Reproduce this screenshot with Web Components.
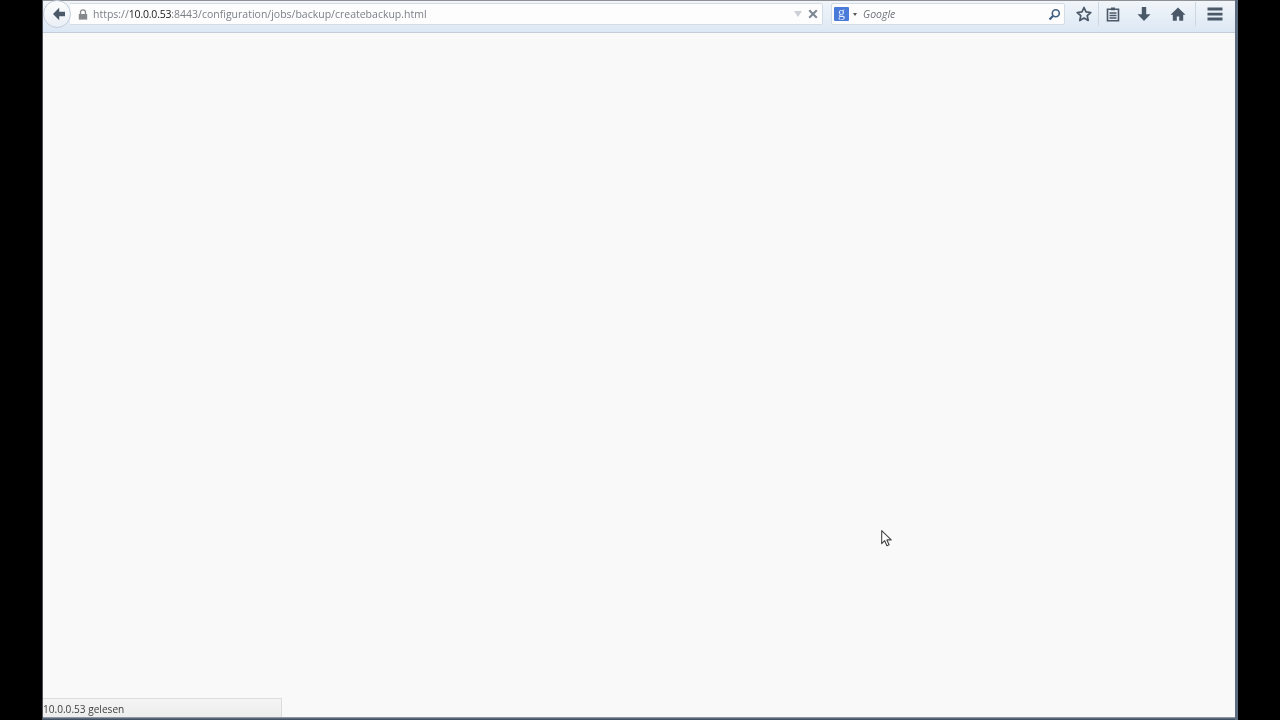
<!DOCTYPE html>
<html>
<head>
<meta charset="utf-8">
<style>
    html, body { margin: 0; height: 100%; background: #000; overflow: hidden; }
    body { font-family: "Open Sans", "Liberation Sans", sans-serif; }
</style>
</head>
<body>
<fx-desktop>
    <fx-window>
        <fx-toolbar slot="toolbar">
            <fx-back slot="back"></fx-back>
            <fx-urlbar slot="url" host="10.0.0.53" scheme="https://" rest=":8443/configuration/jobs/backup/createbackup.html"></fx-urlbar>
            <fx-searchbar slot="search" placeholder="Google"></fx-searchbar>
            <fx-tool slot="tools" icon="star" width="28"></fx-tool>
            <fx-tool slot="tools" icon="list" width="30" divider></fx-tool>
            <fx-tool slot="tools" icon="download" width="32"></fx-tool>
            <fx-tool slot="tools" icon="home" width="35"></fx-tool>
            <fx-tool slot="tools" icon="menu" width="40" divider></fx-tool>
        </fx-toolbar>
        <fx-status>10.0.0.53 gelesen</fx-status>
        <fx-cursor></fx-cursor>
    </fx-window>
</fx-desktop>

<script>
const ICONS = {
    star: `<path d="M8 1.500l2 4.400 4.800.6-3.600 3.200 1 4.800L8 12.100l-4.200 2.400 1-4.800L1.200 6.500 6 5.900z" fill="none" stroke="#4b5868" stroke-width="1.700" stroke-linejoin="round"/>`,
    list: `<path d="M2.500 3.300h11v11.400h-11z" fill="none" stroke="#4b5868" stroke-width="1.600"/><path d="M6 1.500h4v2.800H6z" fill="#4b5868"/><path d="M4.500 7h7M4.500 9.500h7M4.500 12h7" stroke="#4b5868" stroke-width="1.300"/>`,
    download: `<path d="M5.800 1h4.400v7.200h4.300L8 15 1.500 8.200h4.300z" fill="#4b5868"/>`,
    home: `<path d="M8 1.500L.5 8.700h2.300v6h4v-4.200h2.400v4.200h4v-6h2.300z" fill="#4b5868"/>`,
    menu: `<path d="M.5 1.500h15v3H.5zM.5 6.800h15v2.600H.5zM.5 11.500h15v3H.5z" fill="#4b5868"/>`,
};

class FxDesktop extends HTMLElement {
    constructor() {
        super();
        this.attachShadow({ mode: "open" }).innerHTML = `
            <style>
                :host { display: flex; height: 720px; background: #000; }
                .edge-left { width: 43px; flex: none; box-sizing: border-box; background: #000; border-right: 1px solid #4c4f55; }
                .edge-right { width: 45px; flex: none; background: #000; border-left: 3px solid #5d6b80; box-sizing: border-box; }
                .main { flex: 1; min-width: 0; display: flex; }
            </style>
            <div class="edge-left"></div>
            <div class="main"><slot></slot></div>
            <div class="edge-right"></div>
        `;
    }
}

class FxWindow extends HTMLElement {
    constructor() {
        super();
        this.attachShadow({ mode: "open" }).innerHTML = `
            <style>
                :host { display: flex; flex-direction: column; flex: 1; position: relative; height: 720px; background: #f9f9f9; }
                .page { flex: 1; background: #f9f9f9; }
                .bottom { height: 3px; flex: none; background: linear-gradient(#a8b0bb, #4b5a6c 60%, #3c4a5c); }
            </style>
            <slot name="toolbar"></slot>
            <div class="page"></div>
            <div class="bottom"></div>
            <slot></slot>
        `;
    }
}

class FxToolbar extends HTMLElement {
    constructor() {
        super();
        this.attachShadow({ mode: "open" }).innerHTML = `
            <style>
                :host {
                    display: flex; align-items: center; flex: none;
                    height: 33px; box-sizing: border-box;
                    border-top: 1px solid #8e9196;
                    border-bottom: 1px solid #c4ced9;
                    background: linear-gradient(#f1f5f9, #dce8f5);
                    padding-bottom: 5px;
                }
                .nav { display: flex; align-items: center; flex: 1; min-width: 0; }
                .tools { display: flex; align-items: center; flex: none; margin-left: 5px; }
            </style>
            <div class="nav">
                <slot name="back"></slot>
                <slot name="url"></slot>
            </div>
            <slot name="search"></slot>
            <div class="tools"><slot name="tools"></slot></div>
        `;
    }
}

class FxBack extends HTMLElement {
    constructor() {
        super();
        this.attachShadow({ mode: "open" }).innerHTML = `
            <style>
                :host {
                    display: flex; align-items: center; justify-content: center; flex: none;
                    width: 28px; height: 28px; margin-right: -1px; box-sizing: border-box; border-radius: 50%;
                    background: linear-gradient(#fbfcfd, #eaeff6);
                    border: 1px solid #c3ccd8; position: relative; z-index: 1;
                }
                svg { display: block; margin-left: 3px; filter: blur(.3px); }
            </style>
            <svg width="14" height="14" viewBox="0 0 14 14"><path d="M7.200 .8L1 7l6.200 6.200V9.300H13V4.700H7.200z" fill="#4b5868"/></svg>
        `;
    }
}

class FxUrlbar extends HTMLElement {
    constructor() {
        super();
        this.attachShadow({ mode: "open" }).innerHTML = `
            <style>
                :host {
                    display: flex; align-items: center; flex: 1; min-width: 0;
                    height: 22px; box-sizing: border-box;
                    background: #fdfdfe; border: 1px solid #d3dbe5; border-left: none;
                    border-radius: 0 2px 2px 0;
                    font-size: 10.5px; color: #7c8087; white-space: nowrap;
                    padding-left: 8px;
                }
                .lock { flex: none; display: block; margin-right: 5px; filter: blur(.3px); }
                .text { flex: 1; filter: blur(.3px); }
                b { font-weight: 400; color: #1b1b1b; letter-spacing: -.2px; }
                .arrow { flex: none; width: 0; height: 0; margin-right: 6.500px;
                    border-left: 4.500px solid transparent; border-right: 4.500px solid transparent; border-top: 6px solid #ccd0d6; }
                .stop { flex: none; display: block; margin-right: 4px; filter: blur(.2px); }
            </style>
            <svg class="lock" width="10" height="11" viewBox="0 0 10 11"><path d="M2.500 5V3.300a2.500 2.500 0 0 1 5 0V5" fill="none" stroke="#85888d" stroke-width="1.300"/><path d="M.8 5h8.400v5.600H.8z" fill="#85888d"/></svg>
            <span class="text"><span id="scheme"></span><b id="host"></b><span id="rest"></span></span>
            <span class="arrow"></span>
            <svg class="stop" width="10" height="10" viewBox="0 0 10 10"><path d="M1.200 1.200l7.600 7.600M8.800 1.200L1.200 8.800" stroke="#7d8692" stroke-width="2"/></svg>
        `;
    }
    connectedCallback() {
        for (const name of ["scheme", "host", "rest"]) {
            this.shadowRoot.querySelector(`#${name}`).textContent = this.getAttribute(name);
        }
    }
}

class FxSearchbar extends HTMLElement {
    constructor() {
        super();
        this.attachShadow({ mode: "open" }).innerHTML = `
            <style>
                :host {
                    display: flex; align-items: center; flex: none;
                    width: 234px; height: 22px; box-sizing: border-box; margin-left: 8px;
                    background: #fdfdfe; border: 1px solid #d3dbe5; border-radius: 2px;
                    padding: 0 3px 0 2px;
                    font-size: 10.5px; font-style: italic; color: #70747a;
                }
                .g {
                    flex: none; width: 15px; height: 14px; border-radius: 1px;
                    background: #4a7bd8; color: #dfe8ff; font: 400 14px/12px "Liberation Serif", serif;
                    text-align: center; filter: blur(.3px);
                }
                .drop { flex: none; width: 0; height: 0; margin: 0 5.500px 0 3.500px;
                    border-left: 2.500px solid transparent; border-right: 2.500px solid transparent; border-top: 3px solid #555; }
                .text { flex: 1; margin-left: 1px; filter: blur(.3px); }
                svg { flex: none; display: block; filter: blur(.2px); }
            </style>
            <span class="g">g</span>
            <span class="drop"></span>
            <span class="text" id="text"></span>
            <svg width="13" height="13" viewBox="0 0 13 13"><circle cx="7.800" cy="5.200" r="3.500" fill="none" stroke="#3f5f80" stroke-width="1.600"/><path d="M5.200 7.800L1.500 11.500" stroke="#3f5f80" stroke-width="2.200"/></svg>
        `;
    }
    connectedCallback() {
        this.shadowRoot.querySelector("#text").textContent = this.getAttribute("placeholder");
    }
}

class FxTool extends HTMLElement {
    constructor() {
        super();
        this.attachShadow({ mode: "open" }).innerHTML = `
            <style>
                :host { display: flex; align-items: center; justify-content: center; flex: none; height: 24px; box-sizing: border-box; }
                :host([divider]) { border-left: 1px solid #cdd7e2; }
                :host([divider]) svg { margin-left: -2px; }
                svg { display: block; filter: blur(.3px); }
            </style>
            <svg width="16" height="16" viewBox="0 0 16 16"></svg>
        `;
    }
    connectedCallback() {
        this.style.width = `${this.getAttribute("width")}px`;
        this.shadowRoot.querySelector("svg").innerHTML = ICONS[this.getAttribute("icon")];
    }
}

class FxStatus extends HTMLElement {
    constructor() {
        super();
        this.attachShadow({ mode: "open" }).innerHTML = `
            <style>
                /* floats over the page like the real status panel */
                :host {
                    position: absolute; left: 0; bottom: 3px; width: 239px; height: 19px;
                    box-sizing: border-box; background: linear-gradient(#f4f4f4, #ededed);
                    border-top: 1px solid #dcdcdc; border-right: 1px solid #dcdcdc;
                    font-size: 10.100px; line-height: 20px; color: #3e3e3e; white-space: nowrap;
                }
                span { filter: blur(.3px); display: block; }
            </style>
            <span><slot></slot></span>
        `;
    }
}

class FxCursor extends HTMLElement {
    constructor() {
        super();
        this.attachShadow({ mode: "open" }).innerHTML = `
            <style>
                :host { position: absolute; left: 838px; top: 530px; width: 12px; height: 17px; }
                svg { display: block; filter: blur(.3px); }
            </style>
            <svg width="12" height="17" viewBox="0 0 12 17"><path d="M.7.7v13l3-3 2.200 5 2.200-1-2.200-4.800h4.300z" fill="#fff" stroke="#444" stroke-width="1.100" stroke-linejoin="round"/></svg>
        `;
    }
}

customElements.define("fx-desktop", FxDesktop);
customElements.define("fx-window", FxWindow);
customElements.define("fx-toolbar", FxToolbar);
customElements.define("fx-back", FxBack);
customElements.define("fx-urlbar", FxUrlbar);
customElements.define("fx-searchbar", FxSearchbar);
customElements.define("fx-tool", FxTool);
customElements.define("fx-status", FxStatus);
customElements.define("fx-cursor", FxCursor);
</script>
</body>
</html>
